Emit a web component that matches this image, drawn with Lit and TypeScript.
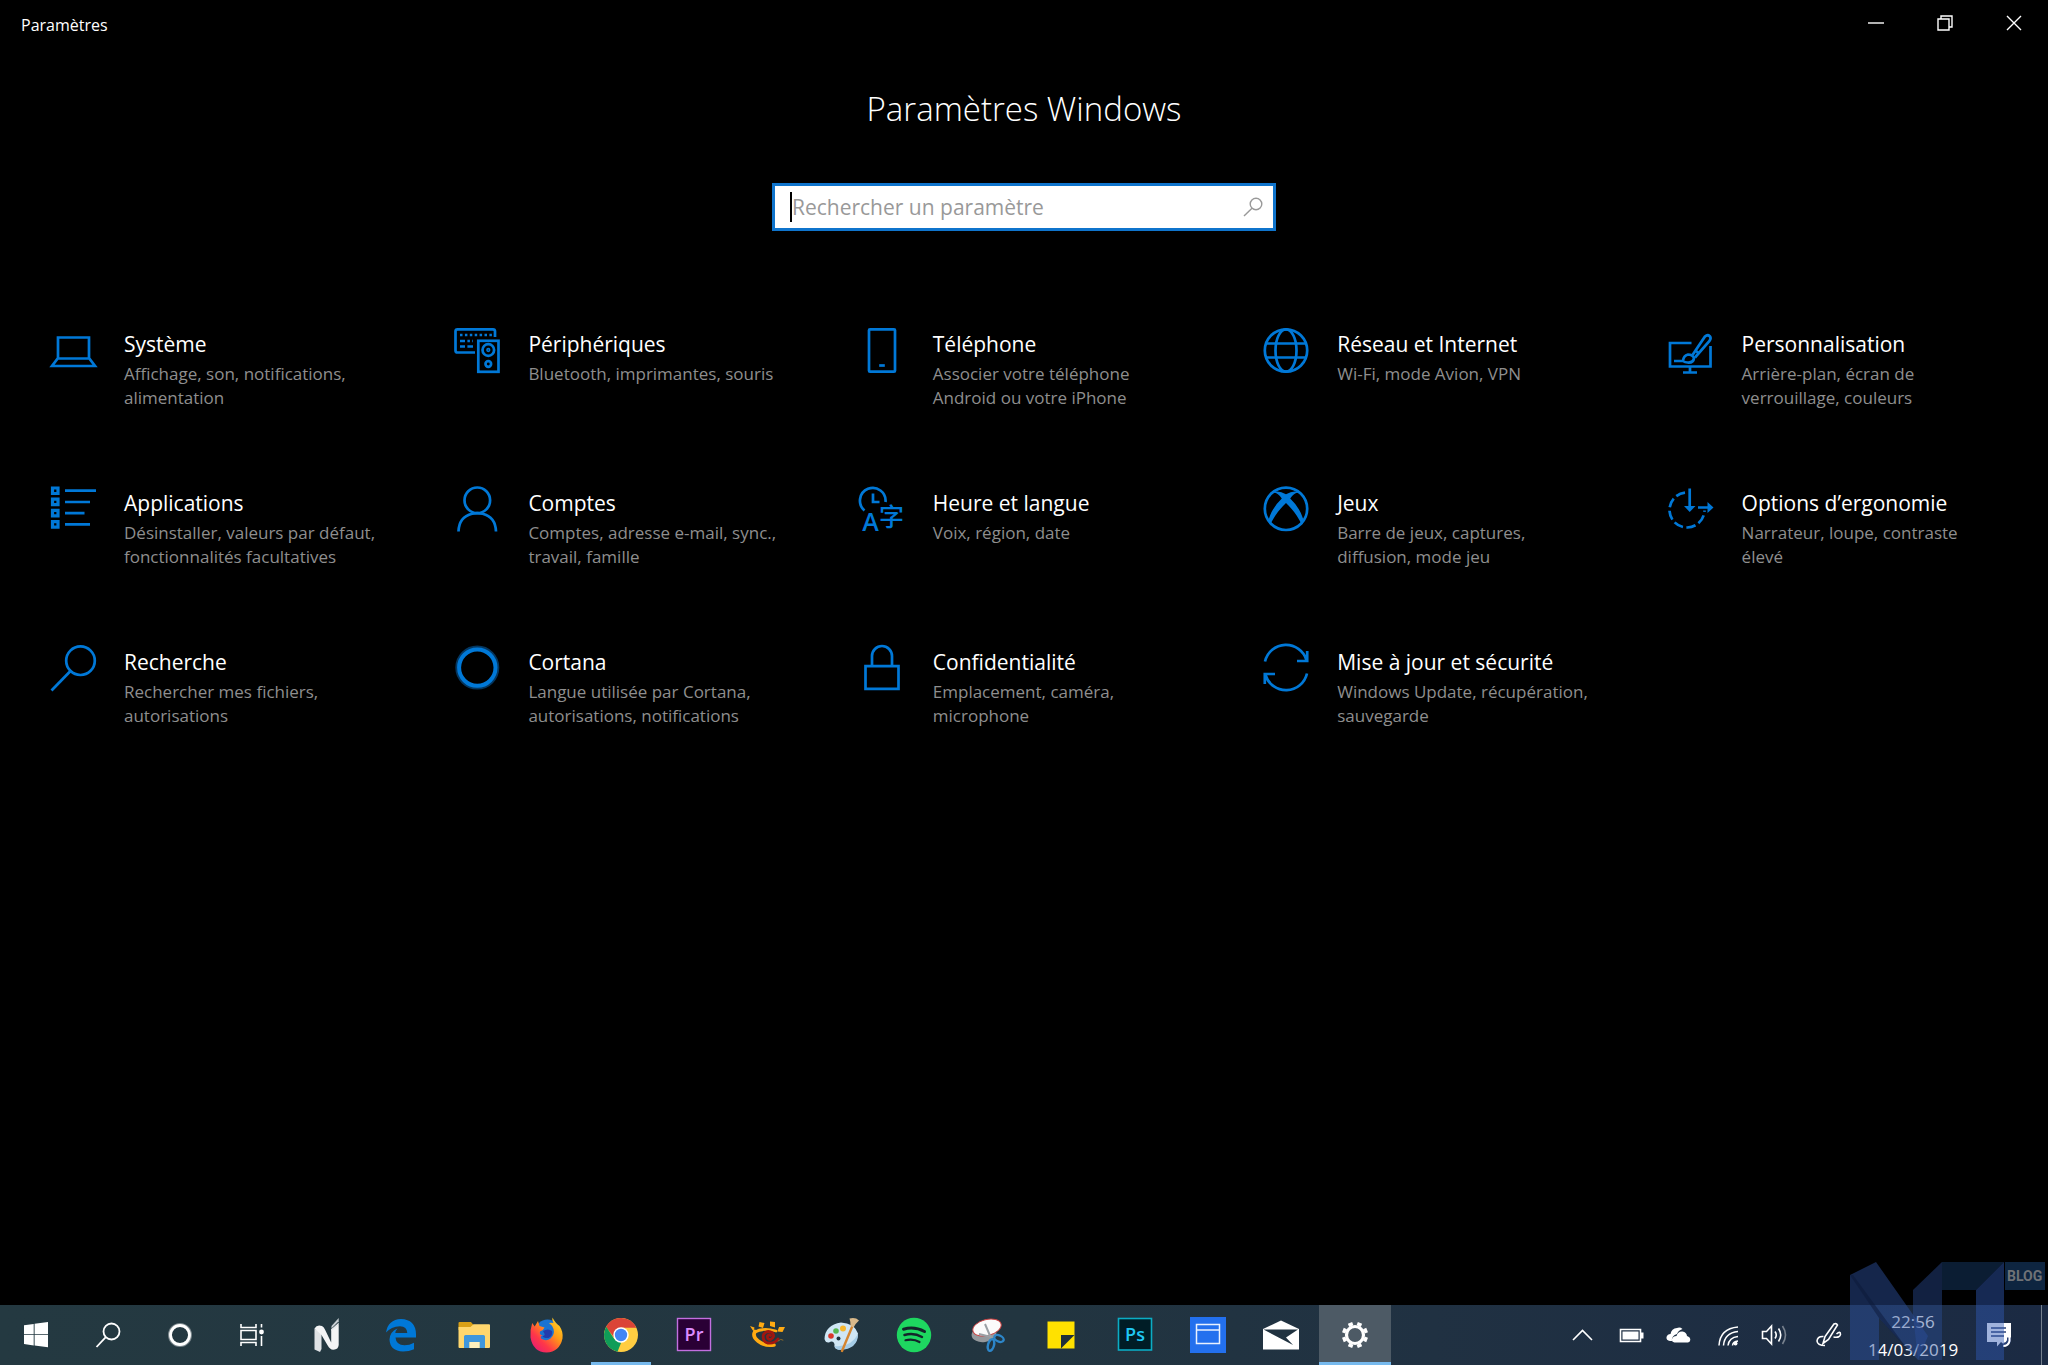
import { LitElement, html, svg, css, type TemplateResult } from "lit";
import { customElement, property } from "lit/decorators.js";
import { classMap } from "lit/directives/class-map.js";

interface Category {
  title: string;
  detail: string;
  icon: TemplateResult;
}

interface AppItem {
  name: string;
  icon: TemplateResult;
  running?: boolean;
  active?: boolean;
}

const categories: Category[] = [
  {
    title: "Système",
    detail: "Affichage, son, notifications, alimentation",
    icon: svg`<path d="M8 9.500h31v20.500l6 8H2l6-8zM8 30.500h31"/>`,
  },
  {
    title: "Périphériques",
    detail: "Bluetooth, imprimantes, souris",
    icon: svg`<path d="M21 24.500H3.500Q1.500 24.500 1.500 22.500V3.300q0-2 2-2H39q2 0 2 2V9"/>
      <path d="M6 7h33" stroke-dasharray="2.500 2.400"/>
      <path d="M6 13h13" stroke-dasharray="5 2.400 2.500 2.400"/>
      <path d="M6 18.500h13" stroke-dasharray="5 2.400 6 2"/>
      <rect x="24.300" y="12.800" width="20.200" height="31"/>
      <circle cx="34.300" cy="22" r="5.800"/><circle cx="34.300" cy="22" r=".8"/><circle cx="34.300" cy="36" r="2.800"/>`,
  },
  {
    title: "Téléphone",
    detail: "Associer votre téléphone Android ou votre iPhone",
    icon: svg`<rect x="10" y="1.300" width="26" height="42.400" rx="1"/><path d="M20.200 37.500h5.600"/>`,
  },
  {
    title: "Réseau et Internet",
    detail: "Wi-Fi, mode Avion, VPN",
    icon: svg`<circle cx="23" cy="22.500" r="21.200"/><ellipse cx="23" cy="22.500" rx="10.500" ry="21.200"/><path d="M3 15.500h40M3 29.500h40"/>`,
  },
  {
    title: "Personnalisation",
    detail: "Arrière-plan, écran de verrouillage, couleurs",
    icon: svg`<path d="M23.500 15H2v23.500h40.500V18M22 38.500V44M15 44.500h14"/>
      <path d="M24.500 27L37 8.500q2.600-2.400 4.800-.3 1.700 2.200-.3 4.600L27 29.500M27.500 22.500l4 3.500"/>
      <path d="M6 33h9q.5-5.500 5-6.500 4.500 0 6 3.500-.5 5-6.500 4.500-2.500 0-4.500-1.500"/>`,
  },
  {
    title: "Applications",
    detail: "Désinstaller, valeurs par défaut, fonctionnalités facultatives",
    icon: svg`<path d="M2.500 1h5.500v5.500H2.500zM2.500 12.200h5.500v5.500H2.500zM2.500 23.400h5.500v5.500H2.500zM2.500 34.600h5.500v5.500H2.500z" stroke-width="3.200"/>
      <path d="M15 3.700h31M15 15h25M15 26.200h19.500M15 37.400h25"/>`,
  },
  {
    title: "Comptes",
    detail: "Comptes, adresse e-mail, sync., travail, famille",
    icon: svg`<circle cx="23.300" cy="13.300" r="12.800"/><path d="M4.500 44.500Q5 30 18 26.800q5.300-1.200 10.600 0Q41.500 30 42 44.500"/>`,
  },
  {
    title: "Heure et langue",
    detail: "Voix, région, date",
    icon: svg`<path d="M5.500 23.500A12.800 12.800 0 1 1 26.500 15M14 6.500V15h6.500"/>
      <text class="sign latin" x="11.500" y="43.500">A</text><text class="sign han" x="32.500" y="39">字</text>`,
  },
  {
    title: "Jeux",
    detail: "Barre de jeux, captures, diffusion, mode jeu",
    icon: svg`<circle cx="23" cy="21.800" r="21.200"/>
      <path class="solid" d="M9.500 6q5-3.500 13.500 1.300Q31.500 2.500 36.500 6q-5-1-9.300 5.500 9.500 9 13 20.500.8 4-1.500 6Q34 26.500 23 16 12 26.500 7.300 38q-2.300-2-1.500-6 3.500-11.500 13-20.500Q14.500 5 9.500 6z"/>`,
  },
  {
    title: "Options d’ergonomie",
    detail: "Narrateur, loupe, contraste élevé",
    icon: svg`<path d="M17 5.600A17.500 17.500 0 1 0 36.500 23.500" stroke-dasharray="9.500 3.500"/>
      <path d="M21.700 1.500v19M30 20.500h10"/><path class="solid" d="M16 19h11.500L21.700 25zM39.500 15l6 5.500-6 5.500z"/>`,
  },
  {
    title: "Recherche",
    detail: "Rechercher mes fichiers, autorisations",
    icon: svg`<circle cx="30.500" cy="14.700" r="14.300"/><path d="M20.500 25L1.500 44.500"/>`,
  },
  {
    title: "Cortana",
    detail: "Langue utilisée par Cortana, autorisations, notifications",
    icon: svg`<circle class="halo" cx="23.300" cy="21.600" r="20"/><circle cx="23.300" cy="21.600" r="18.200" stroke-width="4"/>`,
  },
  {
    title: "Confidentialité",
    detail: "Emplacement, caméra, microphone",
    icon: svg`<path d="M6.500 20.200h33v22.600h-33zM13 20V10a10 10 0 0 1 20 0v10"/>`,
  },
  {
    title: "Mise à jour et sécurité",
    detail: "Windows Update, récupération, sauvegarde",
    icon: svg`<path d="M2 15.500A21.500 21.500 0 0 1 43.500 14M44.200 5v10H34M44 27.500A21.500 21.500 0 0 1 2.500 29M1.800 38V28H12"/>`,
  },
];

const systemButtons: AppItem[] = [
  {
    name: "Démarrer",
    icon: svg`<path fill="#fff" d="M6 8.200l9.700-1.300v10.300H6zM16.600 6.800L30 5v12.200H16.600zM6 18.100h9.700v10.300L6 27.100zM16.600 18.100H30v12.200l-13.400-1.800z"/>`,
  },
  {
    name: "Rechercher",
    icon: svg`<g fill="none" stroke="#fff" stroke-width="1.800"><circle cx="21.500" cy="14.500" r="8"/><path d="M15.800 20.200L6.500 30"/></g>`,
  },
  {
    name: "Cortana",
    icon: svg`<circle cx="18" cy="18" r="10" fill="none" stroke="#fff" stroke-opacity=".4" stroke-width="4"/><circle cx="18" cy="18" r="9.500" fill="none" stroke="#fff" stroke-width="2.800"/>`,
  },
  {
    name: "Affichage des tâches",
    icon: svg`<g fill="none" stroke="#fff" stroke-width="1.600"><path d="M7 7v3.500h15V7M7 13.500h15v9H7zM7 29v-3.500h15V29M27.500 7v3.500M27.500 19v10"/><circle cx="27.500" cy="15" r="1.600" fill="#fff"/></g>`,
  },
];

const apps: AppItem[] = [
  {
    name: "NT Blog",
    icon: svg`<path fill="#dfe2e5" d="M5.500 11.500L12.500 16v16l-1.500 3-5.500-2.500z"/><path fill="#f3f4f5" d="M5.500 11.500Q8 7 13 9q2 1 3.200 4l6 12.500V12l7.500-4v20q-.5 4-4 4.500-4.500 1-7-4L12.500 18z"/><path fill="#c9cfd3" d="M22.500 9l7.200-8v3.300l-7.200 7.200z"/><path fill="#e8eaec" d="M22.500 12.300l7.200-6.800v2.700l-7.200 6z"/>`,
  },
  {
    name: "Microsoft Edge",
    icon: svg`<path fill="#0078d7" d="M3 15.500Q5 2.500 18 2q14.500.5 15 15v3.500H12.500q.5 7.500 9 7.700 5 0 9.500-2.500v6.500Q26 34.500 20 34.500 7 34 6.500 22.500 7 14.500 14.500 11.500q-2 2.200-2.200 4.500h12q-.3-6.700-7.300-6.800Q8 9.500 3 15.500z"/>`,
  },
  {
    name: "Explorateur de fichiers",
    icon: svg`<path fill="#d9a016" d="M2.500 6q0-1 1-1H15l2.500 3v5h-15z"/><path fill="#ffd76e" d="M2.500 10h12l3-2.800H33q1 0 1 1V30q0 1-1 1H3.500q-1 0-1-1z"/><path fill="#3f97dc" d="M8 31V19.500q0-1.500 1.500-1.500h18q1.500 0 1.500 1.500V31h-5.500v-6h-10v6z"/><path fill="#fff0bd" d="M13.500 25h10v6h-10z"/>`,
  },
  {
    name: "Firefox",
    icon: svg`<defs><linearGradient id="ff" x1="1" y1="0" x2=".1" y2="1"><stop offset="0" stop-color="#ffe52b"/><stop offset=".4" stop-color="#ff9a16"/><stop offset=".7" stop-color="#ff3748"/><stop offset="1" stop-color="#e3177b"/></linearGradient></defs>
      <circle cx="18.500" cy="15" r="12.500" fill="#1973d2"/><path fill="url(#ff)" d="M3.200 6l2.500 3.500L9 4l1.500 5 5 1.500q-1 3-4.500 4-1 3.500 3 4-3 0-2 3 5 3.500 9.500 0 4.500-4 3-9.500-1.500-4-4.500-6 2.500-.5 4.500 0-2-2.500-1-5.500 3 6 7 8.500 4 6 3 12.500-3 13.500-16 14Q4 35 1.500 20.500.700 13.500 3.200 6z"/><path fill="#233bab" d="M14 14q5-3 9 0 1 5-3.500 7-5 .5-6-2 4 0 .5-5z"/>`,
  },
  {
    name: "Google Chrome",
    running: true,
    icon: svg`<circle cx="18" cy="18" r="17" fill="#ffcd42"/><path fill="#db4437" d="M3 10A17 17 0 0 1 33.300 10.800H18L11.500 21z"/><path fill="#0f9d58" d="M3.200 9.700L11.300 22l6.900 3.500-3.700 9.200A17 17 0 0 1 3.200 9.700z"/><circle cx="18" cy="18" r="7.700" fill="#fff"/><circle cx="18" cy="18" r="6.200" fill="#4285f4"/>`,
  },
  {
    name: "Adobe Premiere Pro",
    icon: svg`<rect x="1.500" y="1.500" width="33" height="32" fill="#2a0035" stroke="#c36fe0" stroke-width="1.400"/><text class="adobe" x="18" y="24" fill="#dd8cff">Pr</text>`,
  },
  {
    name: "XnView",
    icon: svg`<g fill="none" stroke-linecap="round"><path d="M5 15q8-4.500 21-1" stroke="#ffaa12" stroke-width="2.800"/><path d="M5 14.500q-3 5 3 9.500 7 5.500 16 4" stroke="#ffaa12" stroke-width="3.600"/><path d="M20.500 18.500q-1.500-1.500-3 .5-.5 3.500 3 3.500 5-2.500 2-6.500-5-3.500-9 1.500-1.500 6.500 4 8.500 7 1 10.500-4" stroke="#a0160f" stroke-width="2.800"/><path d="M28 24q3-3 5-1" stroke="#8b6a28"/></g><path fill="#ffaa12" d="M0 9l4.500 1.500-1 4zM9.500 5l5 1-1.500 5-4.500-1.500zM20 4.500l5 .5 0 5.500-5-1.500zM29 10l6 0-2.500 5-5-.5z"/>`,
  },
  {
    name: "Paint",
    icon: svg`<path fill="#cfe6f4" d="M1.500 22Q2 8 18 5.500q13 .5 17 11Q34 32 15.500 32.500q-5-.5-4-5.500-1.500-4-5.500-1.500-3.500.5-4.500-3.500z"/><path fill="#a5cce6" d="M11.500 29q16 2 23.500-12 0 15-18 16-4 0-5.500-4z"/><circle cx="8" cy="19" r="2.800" fill="#d9372b"/><circle cx="13" cy="14" r="2.800" fill="#56b651"/><circle cx="20" cy="11.500" r="3" fill="#f6b72f"/><circle cx="15.500" cy="21.500" r="2" fill="#1f3440"/><path stroke="#d5852f" stroke-width="2.400" stroke-linecap="round" d="M19 34L29 10"/><path fill="#d9b98a" d="M27.500 9q0-5-1-7.500 6-1.500 9.500 2-3.500 3-5.500 7z"/>`,
  },
  {
    name: "Spotify",
    icon: svg`<circle cx="18" cy="18" r="17.200" fill="#1ed760"/><g fill="none" stroke="#14242a" stroke-linecap="round"><path d="M7.500 12.200q11-3 21 2.300" stroke-width="3"/><path d="M8.500 18q9.500-2.500 17.500 2" stroke-width="2.500"/><path d="M9.500 23.200q8-1.800 14 1.800" stroke-width="2.200"/></g>`,
  },
  {
    name: "Outil Capture",
    icon: svg`<ellipse cx="14" cy="17" rx="12.500" ry="8" fill="#95999d" transform="rotate(-8 14 17)"/><ellipse cx="17" cy="10.500" rx="14.500" ry="8" fill="#fbfbfb" stroke="#cc4444" stroke-width="1" transform="rotate(-14 17 10.500)"/><path stroke="#9aa0a5" stroke-width="2" d="M15 7l6 14M9 17l12 3"/><g fill="none" stroke="#2d86c9" stroke-width="2.400"><ellipse cx="21" cy="28" rx="3" ry="6" transform="rotate(15 21 28)"/><ellipse cx="29" cy="21.500" rx="5" ry="3" transform="rotate(25 29 21.500)"/></g>`,
  },
  {
    name: "Pense-bêtes",
    icon: svg`<path fill="#ffe100" d="M4.500 4.500h27v27h-27z"/><path fill="#20303a" d="M18 18h13.500L18 31.500z"/>`,
  },
  {
    name: "Adobe Photoshop",
    icon: svg`<rect x="1.500" y="1.500" width="33" height="31.500" fill="#001d26" stroke="#0bacc4" stroke-width="1.600"/><text class="adobe" x="18" y="24" fill="#1fc8f4">Ps</text>`,
  },
  {
    name: "Calendrier",
    icon: svg`<path fill="#2370ee" d="M0 0h36v36H0z"/><path fill="none" stroke="#e9f1ff" stroke-width="1.500" d="M6.500 7.500h23v19h-23zM6.500 13h23"/>`,
  },
  {
    name: "Courrier",
    icon: svg`<path fill="#fff" d="M0 12L18 3.500 36 12v20.500H0z"/><path fill="#203240" d="M.500 12.500h34.500L23 20.500l7 7.500z"/>`,
  },
  {
    name: "Paramètres",
    running: true,
    active: true,
    icon: svg`<circle cx="18" cy="18" r="8.500" fill="none" stroke="#fff" stroke-width="3.200"/><g stroke="#fff" stroke-width="4.600"><path d="M26.900 21.700l3.200 1.300M21.700 26.900l1.300 3.200M14.300 26.900L13 30.100M9.100 21.700L5.900 23M9.100 14.300L5.900 13M14.300 9.100L13 5.900M21.700 9.100L23 5.900M26.900 14.300l3.200-1.300"/></g>`,
  },
];

const trayItems: AppItem[] = [
  { name: "Afficher les icônes cachées", icon: svg`<path class="line" d="M8 23l9.500-9.500L27 23"/>` },
  {
    name: "Batterie",
    icon: svg`<path class="line" d="M6.500 12.500h20v12h-20z"/><path fill="#fff" d="M8.500 14.500h16v8h-16zM27 15.500h2.500v6H27z"/>`,
  },
  {
    name: "OneDrive",
    icon: svg`<path fill="#fff" d="M7 24q-4-.5-3.500-4 1-3 4-3 1-5.500 6.500-6 3-1.200 5.500 1-4.500 1.500-5.500 5-5.500 1.500-5 7z"/><path fill="#fff" d="M11.500 25.500q-3-.5-2.500-3.500 1-3 4.500-3 1.500-5 6-4.500 4 .5 4.500 4.500 3.500 1 3.300 4-.3 2-2.300 2.500z"/>`,
  },
  {
    name: "Wi-Fi",
    icon: svg`<g fill="none" stroke="#fff" stroke-width="1.500"><path d="M7 28.500Q8 11.500 26 10M11.500 28.500q1-12.500 14.500-14M16 28.500q1-8 10-9M20.500 28.500q.5-4 5.500-4.500"/></g><circle cx="23.500" cy="26.500" r="2" fill="#fff"/>`,
  },
  {
    name: "Volume",
    icon: svg`<path class="line" d="M1.500 14.500h4l5-5.500v18l-5-5.500h-4z"/><path class="line" d="M14 14.500q2.500 3.500 0 7M17.500 11.500q4.500 6.500 0 13"/><path class="line" opacity=".4" d="M21.500 9q6 9 0 18"/>`,
  },
  {
    name: "Espace de travail Windows Ink",
    icon: svg`<path class="line" d="M13 26.500l2-7 9-12.500q2.500-1 3.500 1L18.500 22.500zM13.500 19.500q-6-.5-6.500 4.500.5 4.500 8 4.500M26.500 17q4-3.500 4 .5-.5 3.500-7 2.500"/>`,
  },
];

@customElement("setting-tile")
class SettingTile extends LitElement {
  @property({ attribute: false }) category!: Category;

  static styles = css`
    :host { display: block; }
    .tile {
      display: flex;
      gap: 28px;
      padding: 0 16px 0 37px;
      color: #fff;
      text-decoration: none;
    }
    .icon {
      flex: none;
      width: 46px;
      height: 46px;
      overflow: visible;
      fill: none;
      stroke: #0078d7;
      stroke-width: 2.7;
    }
    .solid { fill: #0078d7; stroke: none; }
    .halo { stroke: #04365f; stroke-width: 4; }
    .sign { fill: #0078d7; stroke: none; text-anchor: middle; }
    .latin { font: 600 25px "Open Sans", sans-serif; }
    .han { font: 500 25px "Noto Sans CJK SC", sans-serif; }
    .text { width: 260px; }
    .title {
      margin: 0;
      font-size: 21px;
      font-weight: 400;
      line-height: 32px;
    }
    .detail {
      margin: 2px 0 0;
      color: #8e8e8e;
      font-size: 17px;
      line-height: 24px;
    }
  `;

  render() {
    return html`<a class="tile" href="#">
      <svg class="icon" viewBox="0 0 46 46" aria-hidden="true">${this.category.icon}</svg>
      <div class="text">
        <h2 class="title">${this.category.title}</h2>
        <p class="detail">${this.category.detail}</p>
      </div>
    </a>`;
  }
}

@customElement("task-bar")
class TaskBar extends LitElement {
  static styles = css`
    :host { display: block; }
    .bar {
      display: flex;
      height: 60px;
      background: linear-gradient(90deg, #243941 0%, #223540 50%, #203142 70%, #1b2a43 100%);
      color: #fff;
    }
    button {
      display: flex;
      align-items: center;
      justify-content: center;
      margin: 0;
      padding: 0;
      border: 0;
      background: none;
      color: inherit;
      font: inherit;
    }
    svg { width: 36px; height: 36px; flex: none; overflow: visible; }
    .system { display: grid; grid-template-columns: repeat(4, 72px); }
    .apps {
      display: grid;
      grid-template-columns: repeat(15, 1fr);
      gap: 1px;
      width: 1100px;
      margin-left: 3px;
    }
    .app { position: relative; }
    .app.active { background: #4d5a65; }
    .app.running::after {
      content: "";
      position: absolute;
      right: 6px;
      bottom: 0;
      left: 6px;
      height: 3px;
      background: #76b9ed;
    }
    .app.active::after { right: 0; left: 0; }
    .adobe { font: 600 18px "Open Sans", sans-serif; text-anchor: middle; }
    .tray { display: flex; margin-left: auto; }
    .tray-item { width: 49px; }
    .line { fill: none; stroke: #fff; stroke-width: 1.6; }
    .clock {
      flex-direction: column;
      width: 122px;
      padding-top: 2px;
      font-size: 17px;
      line-height: 28px;
    }
    .notifications { width: 50px; margin-right: 17px; }
    .desktop { width: 7px; border-left: 1px solid #75808e; }
  `;

  private icon(item: AppItem) {
    return html`<svg viewBox="0 0 36 36" aria-hidden="true">${item.icon}</svg>`;
  }

  render() {
    return html`<nav class="bar" aria-label="Barre des tâches">
      <div class="system">
        ${systemButtons.map((b) => html`<button aria-label=${b.name}>${this.icon(b)}</button>`)}
      </div>
      <div class="apps">
        ${apps.map(
          (a) => html`<button
            class=${classMap({ app: true, running: !!a.running, active: !!a.active })}
            aria-label=${a.name}
          >${this.icon(a)}</button>`
        )}
      </div>
      <div class="tray">
        ${trayItems.map((t) => html`<button class="tray-item" aria-label=${t.name}>${this.icon(t)}</button>`)}
        <button class="clock"><span>22:56</span><span>14/03/2019</span></button>
        <button class="notifications" aria-label="Centre de notifications">
          <svg viewBox="0 0 36 36" aria-hidden="true">
            <path fill="#fff" d="M6 6h24v14.500q-1 6-7 7l-3-2.500-4 4.500V25H6z"/>
            <path stroke="#2a4175" stroke-width="1.400" d="M10 11h15M10 15h15M10 19h13"/>
            <path fill="none" stroke="#2a4175" stroke-width="4" d="M28 20.500v3q-1 4-5.500 4.500"/>
            <path fill="none" stroke="#fff" stroke-width="2" d="M28.500 20v4q-1 5-6.500 5"/>
          </svg>
        </button>
        <button class="desktop" aria-label="Afficher le bureau"></button>
      </div>
    </nav>`;
  }
}

@customElement("app-root")
class AppRoot extends LitElement {
  static styles = css`
    :host {
      position: relative;
      display: flex;
      flex-direction: column;
      min-height: 100vh;
      overflow: hidden;
      background: #000;
      color: #fff;
      font-family: "Segoe UI", "Open Sans", "Noto Sans", sans-serif;
    }
    .title-bar {
      display: flex;
      align-items: center;
      height: 49px;
      padding-left: 21px;
      font-size: 16px;
    }
    .app-name { flex: 1; }
    .window-button {
      width: 69px;
      height: 48px;
      padding: 0;
      border: 0;
      background: none;
    }
    .window-button svg {
      width: 16px;
      height: 16px;
      fill: none;
      stroke: #fff;
      stroke-width: 1.4;
    }
    .content { flex: 1; }
    .heading {
      margin: 34px 0 0;
      font-size: 33px;
      font-weight: 300;
      line-height: 52px;
      text-align: center;
    }
    .search {
      display: flex;
      align-items: center;
      box-sizing: border-box;
      width: 504px;
      max-width: 90%;
      height: 48px;
      margin: 48px auto 0;
      padding: 0 10px 0 15px;
      border: 3px solid #0f74cc;
      background: #fff;
    }
    .caret { width: 2px; height: 30px; background: #000; }
    .search-input {
      flex: 1;
      min-width: 0;
      padding: 0;
      border: 0;
      outline: 0;
      background: none;
      color: #000;
      font: inherit;
      font-size: 21px;
    }
    .search-input::placeholder { color: #999; opacity: 1; }
    .search-button { padding: 0; border: 0; background: none; line-height: 0; }
    .search-button svg {
      width: 20px;
      height: 20px;
      fill: none;
      stroke: #999;
      stroke-width: 1.4;
    }
    .grid {
      display: grid;
      grid-template-columns: repeat(5, 1fr);
      grid-auto-rows: 159px;
      margin: 97px 13px 0;
    }
    .watermark {
      position: absolute;
      right: 0;
      bottom: 0;
      width: 200px;
      height: 110px;
      pointer-events: none;
    }
    .blog {
      fill: #6f7276;
      font: 700 14px Roboto, sans-serif;
    }
  `;

  render() {
    return html`
      <header class="title-bar">
        <span class="app-name">Paramètres</span>
        <button class="window-button" aria-label="Réduire">
          <svg viewBox="0 0 16 16"><path d="M0 8h16"/></svg>
        </button>
        <button class="window-button" aria-label="Restaurer">
          <svg viewBox="0 0 16 16"><path d="M1 4h11v11H1zM4 4V1h11v11h-3"/></svg>
        </button>
        <button class="window-button" aria-label="Fermer">
          <svg viewBox="0 0 16 16"><path d="M1 1l14 14M15 1L1 15"/></svg>
        </button>
      </header>
      <main class="content">
        <h1 class="heading">Paramètres Windows</h1>
        <form class="search" role="search">
          <span class="caret"></span>
          <input class="search-input" type="text" aria-label="Rechercher un paramètre" placeholder="Rechercher un paramètre" />
          <button class="search-button" type="button" aria-label="Rechercher">
            <svg viewBox="0 0 20 20"><circle cx="13" cy="7" r="5.800"/><path d="M9 11.200L1 19"/></svg>
          </button>
        </form>
        <div class="grid">
          ${categories.map((c) => html`<setting-tile .category=${c}></setting-tile>`)}
        </div>
      </main>
      <task-bar></task-bar>
      <svg class="watermark" viewBox="0 0 200 110" aria-hidden="true">
        <path fill="#2b4f9c" fill-opacity=".48" d="M2 20L28 7l52 74-10 24-39-42v42H2z"/>
        <path fill="#0c1838" fill-opacity=".5" d="M2 20l3 0 55 75-29-32z"/>
        <path fill="#2b4f9c" fill-opacity=".42" d="M65 35L94 7v98H70l-5-45z"/>
        <path fill="#173d6b" fill-opacity=".48" d="M94 7h62l-28 28H94z"/>
        <path fill="#3059b4" fill-opacity=".46" d="M128 35l28-28v98h-28z"/>
        <path fill="#173d6b" fill-opacity=".6" d="M157 7h40v28h-40z"/>
        <text class="blog" x="159" y="26">BLOG</text>
      </svg>
    `;
  }
}
